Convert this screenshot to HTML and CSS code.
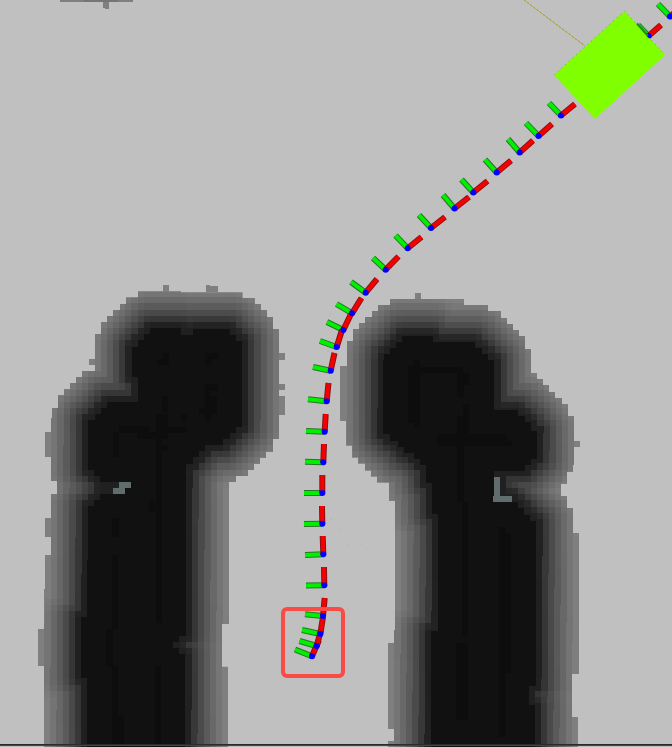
FILE: index.html
```
<!DOCTYPE html>
<html lang="en">
<head>
<meta charset="utf-8">
<meta name="viewport" content="width=device-width, initial-scale=1">
<title>Costmap view</title>
<link rel="stylesheet" href="styles.css">
</head>
<body>
<main class="viewer">
<svg class="scene" viewBox="0 0 672 747" role="img" aria-label="Costmap with planned path and robot footprint">
  <g class="cells">
    <rect class="edge" x="60" y="0" width="73" height="2"/>
    <rect class="edge-dark" x="84" y="0" width="34" height="2"/>
    <rect class="edge" x="103" y="2" width="6" height="6"/>
    <rect class="edge" x="105" y="8" width="4" height="1"/>
    <g id="map"></g>
  </g>
  <g class="specks">
    <circle cx="331" cy="519" r=".6"/><circle cx="341" cy="530" r=".6"/><circle cx="348" cy="546" r=".6"/><circle cx="361" cy="544" r=".6"/><circle cx="391" cy="248" r=".6"/><circle cx="330" cy="315" r=".6"/><circle cx="328" cy="351" r=".6"/>
  </g>
  <path class="ray" d="M524 0L585 46"/>
  <path class="ray-dots" d="M524 0L585 46"/>
  <g id="poses"></g>
  <path class="footprint" d="M624.5 11L665 55L595 119L554 75Z"/>
  <path class="footprint-rim" d="M554 75L624.5 11L665 55"/>
  <path class="peek" d="M637 23.500L648 36"/>
  <circle class="axis-z" cx="649" cy="36.500" r="1.500"/>
  <rect class="highlight" x="283" y="609" width="60" height="67" rx="4"/>
  <rect class="frame-dark" x="0" y="744" width="672" height="2"/>
  <rect class="frame-mid" x="0" y="745" width="672" height="1"/>
</svg>
</main>
<script src="scene.js"></script>
</body>
</html>
```
FILE: styles.css
```
body {
  margin: 0;
  background: #c0c0c0;
}

.viewer {
  overflow: hidden;
}

.scene {
  display: block;
  width: 100%;
  height: auto;
}

.cells,
.frame-dark,
.frame-mid {
  shape-rendering: crispEdges;
}

.edge { fill: #7f7f7f; }
.edge-dark { fill: #757575; }
.core { fill: #111111; }
.trace { fill: #0d0d0d; }
.obstacle { fill: #5f6e6d; }
.specks { fill: #a4a4a4; }

.ray {
  stroke: #b5b16a;
  stroke-width: 1;
}

.ray-dots {
  stroke: #a39d28;
  stroke-width: 1;
  stroke-dasharray: 2 2;
}

.axis-x-shade { stroke: #8c1010; stroke-width: 6; }
.axis-x { stroke: #f40000; stroke-width: 4; }
.axis-y-shade { stroke: #287428; stroke-width: 6; }
.axis-y { stroke: #00f000; stroke-width: 4; }
.axis-z { fill: #0000ff; }

.footprint { fill: #80ff00; }

.footprint-rim {
  fill: none;
  stroke: #74a832;
  stroke-width: 1;
  stroke-dasharray: 1 4;
}

.peek {
  stroke: #208c20;
  stroke-width: 2;
}

.highlight {
  fill: none;
  stroke: #fa4b46;
  stroke-width: 4;
}

.frame-dark { fill: #2b2b2d; }
.frame-mid { fill: #444446; }
```
FILE: scene.js
```
const NS = "http://www.w3.org/2000/svg";

function add(parent, tag, attrs) {
  const node = document.createElementNS(NS, tag);
  for (const key in attrs) node.setAttribute(key, attrs[key]);
  parent.appendChild(node);
  return node;
}

// Outlines are in thirds of a pixel, relative to each region's origin.
const regions = [
  {
    x: 30, y: 270,
    outer: "324,64 453,64 453,67 638,67 638,84 675,84 675,102 693,102 693,120 711,120 711,141 729,141 729,177 747,177 747,507 729,507 729,546 708,546 708,564 690,564 690,582 672,582 672,600 654,600 654,618 618,618 618,636 597,636 597,1062 576,1062 576,1190 594,1190 594,1440 42,1440 42,957 45,957 45,855 63,855 63,672 81,672 81,633 63,633 63,444 66,444 66,414 84,414 84,375 102,375 102,357 120,357 120,339 138,339 138,321 156,321 156,303 195,303 195,192 213,192 213,156 231,156 231,138 249,138 249,120 270,120 270,102 288,102 288,82 324,82",
    core: "360,174 453,174 453,194 489,194 489,177 600,177 600,194 618,194 618,212 636,212 636,470 618,470 618,488 600,488 600,506 578,506 578,524 526,524 526,543 508,543 508,561 489,561 489,582 468,582 468,1098 447,1098 447,1116 430,1116 430,1134 447,1134 447,1152 465,1152 465,1440 171,1440 171,1224 153,1224 153,1041 171,1041 174,708 192,708 192,690 210,690 210,672 249,672 249,654 267,654 267,636 210,636 210,617 192,617 192,599 174,599 174,450 195,450 195,432 213,432 213,414 231,414 231,396 324,396 324,321 306,321 306,230 324,230 324,210 342,210 342,192 360,192",
    bumps: [[399,45,18,20],[528,45,12,22],[540,48,24,19],[177,267,18,18],[747,249,18,20],[747,342,18,18],[747,378,18,57],[45,486,18,74],[45,744,18,56],[24,1077,18,110]],
    traces: [[396,378,18,52],[378,432,36,74],[378,506,18,553],[267,468,92,21],[321,486,75,20],[414,470,57,20],[249,486,18,74],[396,249,20,36],[380,267,18,18],[526,249,38,18],[526,249,20,36],[526,342,38,20],[526,342,18,110],[544,378,18,54],[508,414,20,18],[453,432,18,20],[396,524,18,18],[247,744,20,57],[247,855,18,222],[229,1077,20,110],[245,1187,18,244],[375,1189,18,242],[358,690,18,38],[263,1336,18,95]],
    obstacles: [[267,636,36,18],[249,654,36,18]]
  },
  {
    x: 320, y: 270,
    outer: "210,87 432,87 432,105 504,105 504,123 543,123 543,144 561,144 561,162 579,162 579,180 597,180 597,198 615,198 615,237 633,237 633,309 651,309 651,327 669,327 669,345 687,345 687,366 705,366 705,384 726,384 726,402 744,402 744,438 762,438 762,585 759,585 759,606 741,606 741,642 723,642 723,678 741,678 741,714 759,714 759,789 777,789 777,1212 756,1212 756,1341 774,1341 774,1440 204,1440 204,1413 222,1413 222,1377 204,1377 204,1119 222,1119 222,1080 225,1080 225,693 207,693 207,638 171,638 171,620 153,620 153,602 135,602 135,581 114,581 114,563 96,563 96,527 78,527 78,453 60,453 60,288 81,288 81,213 99,213 99,177 117,177 117,159 135,159 135,141 156,141 156,123 174,123 174,105 210,105",
    core: "246,198 339,198 339,216 465,216 465,234 486,234 486,252 504,252 504,270 522,270 522,420 594,420 594,438 615,438 615,456 633,456 633,483 651,483 651,566 633,566 633,584 615,584 615,602 522,602 522,620 540,620 540,678 576,678 576,696 594,696 594,714 612,714 612,735 630,735 630,753 648,753 648,1248 627,1248 627,1305 645,1305 645,1440 333,1440 333,1083 354,1083 354,732 336,732 336,638 318,638 318,602 318,584 300,584 300,566 282,566 282,548 252,548 252,530 234,530 234,512 210,512 210,492 189,492 189,270 192,270 192,252 210,252 210,234 228,234 228,216 246,216",
    bumps: [[285,69,18,18],[762,513,18,18]],
    traces: [[264,288,18,171],[282,270,18,202],[300,290,130,18],[411,308,20,72],[429,308,18,36],[429,402,18,37],[411,438,36,55],[354,492,204,36],[540,513,36,15],[411,528,20,168],[426,696,18,404],[407,1119,38,230],[537,772,20,630],[555,790,18,420]],
    obstacles: [[522,621,18,75],[519,678,57,18]]
  }
];

const ramp = [17, 32, 55, 74, 90, 104, 117, 127];

function shade(d) {
  const level = Math.max(1, Math.min(6.99, d + 0.5));
  const i = Math.floor(level);
  return Math.round(ramp[i] + (ramp[i + 1] - ramp[i]) * (level - i));
}

function inside(x, y, poly) {
  let hit = false;
  for (let i = 0, j = poly.length - 1; i < poly.length; j = i++) {
    const [ax, ay] = poly[i], [bx, by] = poly[j];
    if ((ay > y) !== (by > y) && x < (bx - ax) * (y - ay) / (by - ay) + ax) hit = !hit;
  }
  return hit;
}

function distance(x, y, poly) {
  let best = Infinity;
  for (let i = 0, j = poly.length - 1; i < poly.length; j = i++) {
    const [ax, ay] = poly[i], [bx, by] = poly[j];
    const dx = bx - ax, dy = by - ay;
    const t = Math.max(0, Math.min(1, ((x - ax) * dx + (y - ay) * dy) / (dx * dx + dy * dy)));
    best = Math.min(best, Math.hypot(x - ax - t * dx, y - ay - t * dy));
  }
  return best;
}

const map = document.getElementById("map");
const CELL = 6.155, X0 = 2.1, Y0 = 1.8;

// Column edge; the grid is turned slightly, so lower rows sit further left.
function edgeX(col, y) {
  const x = X0 + col * CELL;
  return x - Math.max(0, y - 400) / 300 * (0.8 + 1.6 * x / 540);
}

regions.forEach((r, index) => {
  const parse = s => s.split(" ").map(p => {
    const [x, y] = p.split(",").map(Number);
    return [r.x + x / 3, r.y + y / 3];
  });
  const points = poly => poly.map(p => p.join(",")).join(" ");
  const outer = parse(r.outer), core = parse(r.core);
  const clip = add(map, "clipPath", { id: `region-${index}` });
  add(clip, "polygon", { points: points(outer) });
  const layer = add(map, "g", { "clip-path": `url(#region-${index})` });
  const first = index ? 54 : 4, last = index ? 98 : 48;
  for (let row = 45; row < 122; row++) {
    const top = Math.round(Y0 + row * CELL), bottom = Math.round(Y0 + (row + 1) * CELL);
    const cy = (top + bottom) / 2;
    for (let col = first; col < last; col++) {
      const left = Math.round(edgeX(col, cy)), right = Math.round(edgeX(col + 1, cy));
      const cx = (edgeX(col, cy) + edgeX(col + 1, cy)) / 2;
      const v = shade(inside(cx, cy, core) ? 0 : distance(cx, cy, core) / CELL);
      add(layer, "rect", { x: left, y: top, width: right - left, height: bottom - top, fill: `rgb(${v},${v},${v})` });
    }
  }
  add(layer, "polygon", { class: "core", points: points(core) });
  const blocks = (list, name) => list.forEach(([x, y, w, h]) =>
    add(map, "rect", { class: name, x: r.x + x / 3, y: r.y + y / 3, width: w / 3, height: h / 3 }));
  blocks(r.bumps, "edge");
  blocks(r.traces, "trace");
  blocks(r.obstacles, "obstacle");
});

// Each pose: origin, tip of the x axis, tip of the y axis.
const poses = [
  [670,16.5,684,5,658,4], [648.5,36,661,25,638,25],
  [561,115.5,575,104,549,103], [538.5,136,552,124,526,123],
  [519.7,152.5,533,140.5,508,139], [496.7,172.5,511,160.5,485,159.5],
  [473.3,192.5,487.5,181,461.5,179.5], [454.5,208.5,469,197,443,195],
  [431,228,445,217,419,215], [407.7,248.3,421.5,237,395.5,235.5],
  [385.7,269.7,398.5,256.5,373,258], [365.7,292.7,377,279,351,282],
  [352,313.3,361.5,298,336.5,304], [343.3,330,351,314,327,322],
  [336.7,347,342,330,320,341], [330.7,370.7,334.5,353,313,367],
  [326.7,401.3,328.5,383,308,399.3], [324.7,431.7,325.7,414,306,431],
  [323.3,462.3,324,444,305,461.7], [322.3,493,322.3,475,304,493],
  [322.3,523.7,322,506,304,524], [323.3,554.3,322.7,536,305,555],
  [324.3,585.3,324,567,306,585.5], [323,616,324.7,598,305,614.3],
  [320.3,634,323,617,302,630], [316.7,646,321,630,299.5,641],
  [312,656.3,319,640,295,649.5]
];

const layer = document.getElementById("poses");
for (const [x, y, rx, ry, gx, gy] of poses) {
  const green = `M${x} ${y}L${gx} ${gy}`, red = `M${x} ${y}L${rx} ${ry}`;
  add(layer, "path", { class: "axis-y-shade", d: green });
  add(layer, "path", { class: "axis-y", d: green });
  add(layer, "path", { class: "axis-x-shade", d: red });
  add(layer, "path", { class: "axis-x", d: red });
}
for (const [x, y] of poses) add(layer, "circle", { class: "axis-z", cx: x, cy: y, r: 3 });
```
